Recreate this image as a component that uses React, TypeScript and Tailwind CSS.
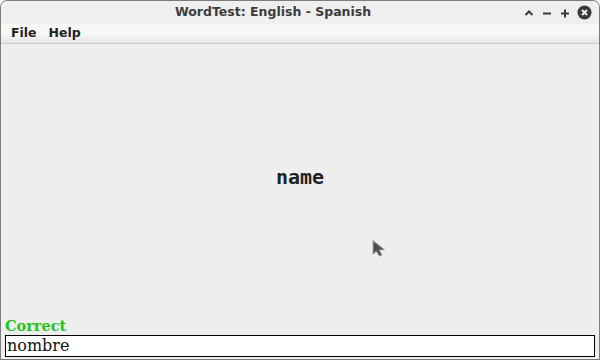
const App = () => {
  return (
    <div className="w-[600px] h-[360px] bg-[#7d7d7d] rounded-t-[7px] p-[1px] overflow-hidden">
      <div className="w-full h-full flex flex-col rounded-t-[6px] overflow-hidden bg-[#eeeeee]">
        {/* Title bar */}
        <div className="relative h-[23px] bg-[#efefef] flex items-center justify-center pr-[54px]">
          <span className="text-[12.5px] font-bold text-[#3c3c3c]" style={{ fontFamily: '"DejaVu Sans", sans-serif' }}>
            WordTest: English - Spanish
          </span>
          <div className="absolute right-[7px] top-0 h-full flex items-center gap-[6px] text-[#3a3a3a]">
            <svg width="12" height="12" viewBox="0 0 12 12">
              <path d="M2.5 8 L6 4.5 L9.5 8" stroke="currentColor" strokeWidth="2" fill="none" />
            </svg>
            <svg width="12" height="12" viewBox="0 0 12 12">
              <path d="M2 6.5 H10" stroke="currentColor" strokeWidth="2" />
            </svg>
            <svg width="12" height="12" viewBox="0 0 12 12">
              <path d="M2 6.5 H10 M6 2.5 V10.5" stroke="currentColor" strokeWidth="2" />
            </svg>
            <svg width="15" height="15" viewBox="0 0 15 15">
              <circle cx="7.5" cy="7.5" r="7" fill="currentColor" />
              <path d="M5 5 L10 10 M10 5 L5 10" stroke="#efefef" strokeWidth="2" />
            </svg>
          </div>
        </div>

        {/* Menu bar */}
        <div className="h-[20px] flex items-center gap-[12px] pl-[10px] border-b border-[#c9c9c9] bg-gradient-to-b from-[#f6f6f6] via-[#f9f9f9] to-[#e4e4e4]">
          <span className="text-[12.5px] font-bold text-[#222]" style={{ fontFamily: '"DejaVu Sans", sans-serif' }}>File</span>
          <span className="text-[12.5px] font-bold text-[#222]" style={{ fontFamily: '"DejaVu Sans", sans-serif' }}>Help</span>
        </div>

        {/* Content */}
        <div className="relative flex-1 flex items-center justify-center pb-[8px]">
          <span className="text-[20px] font-bold text-[#222]" style={{ fontFamily: '"DejaVu Sans Mono", monospace' }}>name</span>
          <svg className="absolute left-[370px] top-[196px]" width="17" height="21" viewBox="0 0 16 20">
            <path d="M2 1 L2 13 L5 10.5 L8 15 L10 14 L7.5 9.5 L12 9 Z" fill="#3a3a3a" stroke="#777" strokeWidth="1" opacity="0.9" />
          </svg>
        </div>

        {/* Bottom */}
        <div className="flex flex-col px-[4px] pb-[2px]">
          <span className="text-[14.5px] leading-[18px] font-bold text-[#22c422]" style={{ fontFamily: '"DejaVu Serif", serif' }}>
            Correct
          </span>
          <div className="h-[22px] bg-white border border-black flex items-center px-[1px]">
            <span className="text-[16px] text-[#111]" style={{ fontFamily: '"DejaVu Serif", serif' }}>nombre</span>
          </div>
        </div>
      </div>
    </div>
  );
};

export default App;
